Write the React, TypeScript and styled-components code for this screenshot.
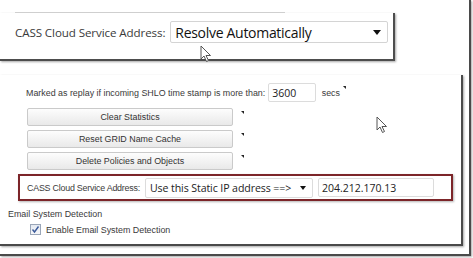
import React from "react";
import styled, { createGlobalStyle } from "styled-components";

const Global = createGlobalStyle`
  html, body { margin: 0; padding: 0; background: #fff; }
  body { width: 473px; height: 258px; overflow: hidden; }
`;

const Outer = styled.div`
  box-sizing: border-box;
  width: 471px;
  height: 256px;
  border-right: 2px solid #4a4a4a;
  border-bottom: 2px solid #4a4a4a;
  box-shadow: 1px 1px 2px rgba(0, 0, 0, 0.35);
  display: flex;
  flex-direction: column;
  font-family: "Liberation Sans", Arial, sans-serif;
`;

const Callout = styled.div`
  box-sizing: border-box;
  margin-top: 13px;
  width: 395px;
  height: 48px;
  border-right: 2px solid #4d4d4d;
  border-bottom: 2px solid #4d4d4d;
  box-shadow: 1px 1px 2px rgba(0, 0, 0, 0.35);
  position: relative;
  display: flex;
  flex-direction: column;
  padding-left: 15px;
`;

const Rule = styled.div`
  height: 1px;
  width: 270px;
  background: #cfcfcf;
  margin-top: -1px;
`;

const CalloutRow = styled.div`
  display: flex;
  align-items: center;
  margin-top: 8px;
  gap: 5px;
  white-space: nowrap;
`;

const BigLabel = styled.span`
  font-family: "Open Sans", "DejaVu Sans", sans-serif;
  font-size: 11.6px;
  letter-spacing: -0.1px;
  color: #3a3a3a;
`;

const BigSelect = styled.div`
  box-sizing: border-box;
  width: 218px;
  height: 22px;
  border: 1px solid #d4d4d4;
  border-radius: 2px;
  display: flex;
  align-items: center;
  justify-content: space-between;
  padding: 0 6px 0 4px;
  font-family: "Open Sans", "DejaVu Sans", sans-serif;
  font-size: 14px;
  letter-spacing: -0.3px;
  color: #111;
`;

const Arrow = styled.span<{ $size: number }>`
  width: 0;
  height: 0;
  border-left: ${(p) => p.$size}px solid transparent;
  border-right: ${(p) => p.$size}px solid transparent;
  border-top: ${(p) => p.$size + 1}px solid #111;
`;

const Cursor = styled.svg<{ $x: number; $y: number }>`
  position: absolute;
  left: ${(p) => p.$x}px;
  top: ${(p) => p.$y}px;
`;

const Inner = styled.div`
  box-sizing: border-box;
  margin-top: 14px;
  width: 463px;
  height: 171px;
  border-right: 2px solid #4a4a4a;
  border-bottom: 2px solid #4a4a4a;
  box-shadow: 1px 1px 2px rgba(0, 0, 0, 0.35);
  position: relative;
  display: flex;
  flex-direction: column;
  padding-top: 8px;
  font-family: "Liberation Sans", Arial, sans-serif;
  font-size: 8.9px;
  color: #3a3a3a;
  white-space: nowrap;
`;

const ReplayRow = styled.div`
  display: flex;
  align-items: center;
  padding-left: 26px;
  gap: 3px;
  margin-bottom: 2px;
`;

const SmallInput = styled.div<{ $w: number }>`
  box-sizing: border-box;
  width: ${(p) => p.$w}px;
  height: 19px;
  border: 1px solid #dcdcdc;
  border-radius: 2px;
  display: flex;
  align-items: center;
  padding-left: 3px;
  font-family: "Open Sans", "DejaVu Sans", sans-serif;
  font-size: 10.5px;
  color: #222;
`;

const Tick = styled.span`
  width: 3px;
  height: 3px;
  background: #222;
  clip-path: polygon(0 0, 100% 0, 100% 100%);
  align-self: flex-start;
  margin-top: 3px;
`;

const ButtonRow = styled.div`
  display: flex;
  align-items: flex-start;
  padding-left: 27px;
  gap: 8px;
  margin-top: 4px;
`;

const Button = styled.div`
  box-sizing: border-box;
  width: 206px;
  height: 18px;
  border: 1px solid #cacaca;
  border-radius: 2px;
  background: linear-gradient(#fdfdfd, #e9e9e9);
  display: flex;
  align-items: center;
  justify-content: center;
  color: #333;
`;

const RedBox = styled.div`
  box-sizing: border-box;
  margin: 4px 0 0 18px;
  width: 435px;
  height: 27px;
  border: 2px solid #7c2529;
  box-shadow: 1px 1px 2px rgba(0, 0, 0, 0.3);
  display: flex;
  align-items: center;
  padding-left: 7px;
  gap: 5px;
`;

const RedLabel = styled.span`
  letter-spacing: -0.22px;
`;

const MidSelect = styled.div`
  box-sizing: border-box;
  width: 168px;
  height: 20px;
  border: 1px solid #dcdcdc;
  border-radius: 2px;
  display: flex;
  align-items: center;
  justify-content: space-between;
  padding: 0 6px 0 4px;
  font-family: "Open Sans", "DejaVu Sans", sans-serif;
  font-size: 10.6px;
  letter-spacing: -0.1px;
  color: #222;
`;

const SectionTitle = styled.div`
  margin: 8px 0 0 8px;
`;

const CheckRow = styled.label`
  display: flex;
  align-items: center;
  gap: 5px;
  margin: 5px 0 0 30px;
`;

const Check = styled.span`
  box-sizing: border-box;
  width: 11px;
  height: 11px;
  border: 1px solid #9aa6b8;
  background: linear-gradient(#e4e9f1, #f6f7f9);
  display: flex;
  align-items: center;
  justify-content: center;
`;

export default function App() {
  return (
    <>
      <Global />
      <Outer>
        <Callout>
          <Rule />
          <CalloutRow>
            <BigLabel>CASS Cloud Service Address:</BigLabel>
            <BigSelect>
              <span>Resolve Automatically</span>
              <Arrow $size={4} />
            </BigSelect>
          </CalloutRow>
          <Cursor $x={200} $y={32} width="13" height="18" viewBox="0 0 13 18">
            <path d="M1 1 L1 14 L4 11 L6.5 16.5 L8.5 15.5 L6 10.5 L10.5 10.5 Z" fill="#fff" stroke="#555" strokeWidth="1" />
          </Cursor>
        </Callout>
        <Inner>
          <ReplayRow>
            <span>Marked as replay if incoming SHLO time stamp is more than:</span>
            <SmallInput $w={48}>3600</SmallInput>
            <span>&nbsp;secs</span>
            <Tick />
          </ReplayRow>
          <ButtonRow>
            <Button>Clear Statistics</Button>
            <Tick />
          </ButtonRow>
          <ButtonRow>
            <Button>Reset GRID Name Cache</Button>
            <Tick />
          </ButtonRow>
          <ButtonRow>
            <Button>Delete Policies and Objects</Button>
            <Tick />
          </ButtonRow>
          <RedBox>
            <RedLabel>CASS Cloud Service Address:</RedLabel>
            <MidSelect>
              <span>Use this Static IP address ==&gt;</span>
              <Arrow $size={3} />
            </MidSelect>
            <SmallInput $w={116}>204.212.170.13</SmallInput>
          </RedBox>
          <SectionTitle>Email System Detection</SectionTitle>
          <CheckRow>
            <Check>
              <svg width="9" height="9" viewBox="0 0 9 9">
                <path d="M1.5 4.5 L3.5 7 L7.5 1.5" fill="none" stroke="#3b5a9a" strokeWidth="1.4" />
              </svg>
            </Check>
            <span>Enable Email System Detection</span>
          </CheckRow>
          <Cursor $x={376} $y={41} width="13" height="18" viewBox="0 0 13 18">
            <path d="M1 1 L1 14 L4 11 L6.5 16.5 L8.5 15.5 L6 10.5 L10.5 10.5 Z" fill="#fff" stroke="#555" strokeWidth="1" />
          </Cursor>
        </Inner>
      </Outer>
    </>
  );
}
